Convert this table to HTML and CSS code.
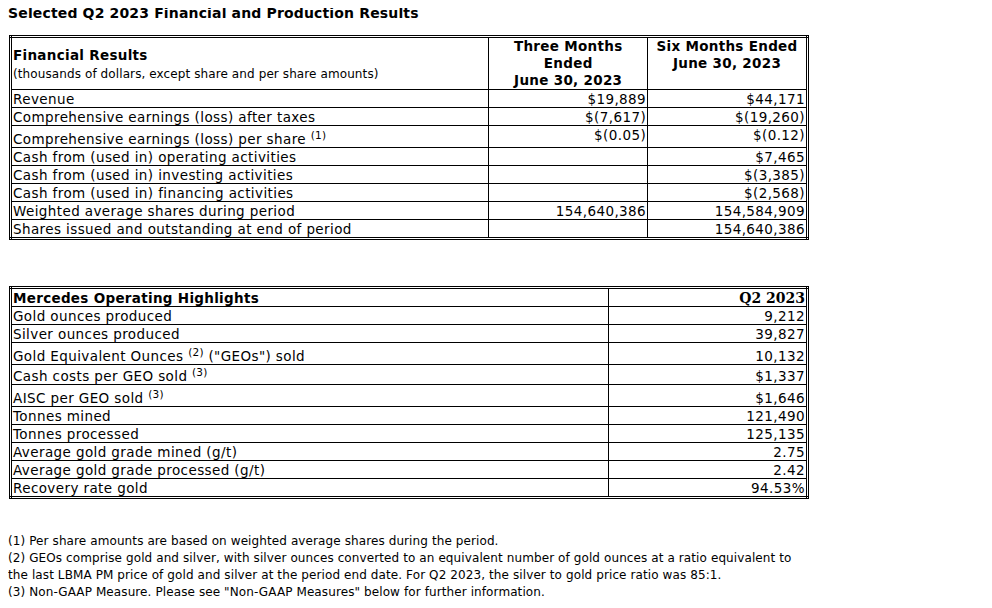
FILE: index.html
```html
<!DOCTYPE html>
<html>
<head>
<meta charset="utf-8">
<link rel="stylesheet" href="styles.css">
</head>
<body>
<div class="title">Selected Q2 2023 Financial and Production Results</div>
<table class="fin">
  <colgroup><col class="c1"><col class="c2"><col class="c3"></colgroup>
  <tr class="head">
    <td class="lbl mid"><div class="hb">Financial Results</div><div class="sub">(thousands of dollars, except share and per share amounts)</div></td>
    <td class="ctr top hb">Three Months<br>Ended<br>June 30, 2023</td>
    <td class="ctr top hb">Six Months Ended<br>June 30, 2023</td>
  </tr>
  <tr><td>Revenue</td><td class="num">$19,889</td><td class="num">$44,171</td></tr>
  <tr><td>Comprehensive earnings (loss) after taxes</td><td class="num">$(7,617)</td><td class="num">$(19,260)</td></tr>
  <tr class="tall"><td>Comprehensive earnings (loss) per share <sup>(1)</sup></td><td class="num top">$(0.05)</td><td class="num top">$(0.12)</td></tr>
  <tr><td>Cash from (used in) operating activities</td><td class="num"></td><td class="num">$7,465</td></tr>
  <tr><td>Cash from (used in) investing activities</td><td class="num"></td><td class="num">$(3,385)</td></tr>
  <tr><td>Cash from (used in) financing activities</td><td class="num"></td><td class="num">$(2,568)</td></tr>
  <tr><td>Weighted average shares during period</td><td class="num">154,640,386</td><td class="num">154,584,909</td></tr>
  <tr><td>Shares issued and outstanding at end of period</td><td class="num"></td><td class="num">154,640,386</td></tr>
</table>

<table class="ops">
  <colgroup><col class="d1"><col class="d2"></colgroup>
  <tr><td class="hb">Mercedes Operating Highlights</td><td class="num serif">Q2 2023</td></tr>
  <tr><td>Gold ounces produced</td><td class="num">9,212</td></tr>
  <tr><td>Silver ounces produced</td><td class="num">39,827</td></tr>
  <tr class="tall"><td>Gold Equivalent Ounces <sup>(2)</sup> ("GEOs") sold</td><td class="num">10,132</td></tr>
  <tr class="tall2"><td>Cash costs per GEO sold <sup>(3)</sup></td><td class="num">$1,337</td></tr>
  <tr class="tall"><td>AISC per GEO sold <sup>(3)</sup></td><td class="num">$1,646</td></tr>
  <tr><td>Tonnes mined</td><td class="num">121,490</td></tr>
  <tr><td>Tonnes processed</td><td class="num">125,135</td></tr>
  <tr><td>Average gold grade mined (g/t)</td><td class="num">2.75</td></tr>
  <tr><td>Average gold grade processed (g/t)</td><td class="num">2.42</td></tr>
  <tr><td>Recovery rate gold</td><td class="num">94.53%</td></tr>
</table>

<div class="notes">
  <div>(1) Per share amounts are based on weighted average shares during the period.</div>
  <div>(2) GEOs comprise gold and silver, with silver ounces converted to an equivalent number of gold ounces at a ratio equivalent to<br>the last LBMA PM price of gold and silver at the period end date. For Q2 2023, the silver to gold price ratio was 85:1.</div>
  <div>(3) Non-GAAP Measure. Please see "Non-GAAP Measures" below for further information.</div>
</div>
</body>
</html>
```
FILE: styles.css
```css
body {
  margin: 8px;
  font-family: "DejaVu Sans", Verdana, sans-serif;
  font-size: 13.5px;
  letter-spacing: 0.4px;
  color: #000;
  background: #fff;
}
.title {
  font-weight: bold;
  font-size: 14px;
  letter-spacing: 0.15px;
  line-height: 16px;
  margin: -3px 0 0 0;
}
table {
  border-collapse: collapse;
  border: 3px double #000;
  margin-left: 1px;
}
table.fin { width: 800px; margin-top: 14px; }
table.ops { width: 800px; margin-top: 46px; }
.c1 { width: 479px; }
.c2 { width: 159px; }
.c3 { width: 160px; }
.d1 { width: 599px; }
.d2 { width: 200px; }
td {
  border: 1px solid #000;
  padding: 1px 1px 0;
  line-height: 16px;
  height: 16px;
  vertical-align: bottom;
  white-space: nowrap;
}
.num { text-align: right; }
.ctr { text-align: center; }
.top { vertical-align: top; }
.mid { vertical-align: middle; }
.hb { font-weight: bold; letter-spacing: 0.3px; }
td.ctr.hb { line-height: 17px; padding-top: 0; }
.sub { font-size: 12px; letter-spacing: 0.1px; line-height: 18px; font-weight: normal; }
.lbl .hb { line-height: 19px; }
tr.tall td { height: 20px; }
tr.tall2 td { height: 18px; }
sup {
  font-size: 10.5px;
  letter-spacing: 0.2px;
  line-height: 0;
  vertical-align: 5px;
}
.serif {
  font-family: "DejaVu Serif", "Liberation Serif", serif;
  font-weight: bold;
  font-size: 14px;
  letter-spacing: 0;
}
.notes {
  margin-top: 34px;
  font-size: 12px;
  letter-spacing: 0.1px;
  line-height: 17px;
}
```
